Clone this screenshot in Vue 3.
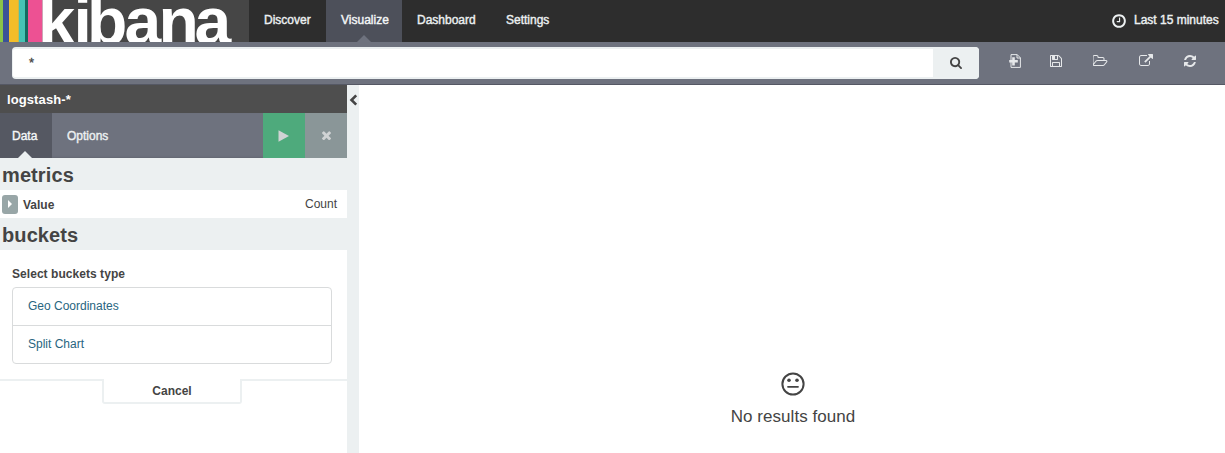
<script setup>
const nav = [
  { label: 'Discover', cls: 'discover' },
  { label: 'Visualize', cls: 'visualize active' },
  { label: 'Dashboard', cls: 'dashboard' },
  { label: 'Settings', cls: 'settings' }
]
const bucketTypes = ['Geo Coordinates', 'Split Chart']
</script>

<template>
  <div class="page">
    <header class="topbar">
      <svg class="logo" width="249" height="42" viewBox="0 0 249 42">
        <rect width="249" height="42" fill="#464646" />
        <rect width="3" height="42" fill="#8ac349" />
        <rect x="3" width="6" height="42" fill="#3b5297" />
        <rect x="9" width="9" height="42" fill="#f3bd29" />
        <rect x="18" width="1" height="42" fill="#c9b84e" />
        <rect x="19" width="6" height="42" fill="#45c3b5" />
        <rect x="25" width="3" height="42" fill="#136b60" />
        <rect x="28" width="14.5" height="42" fill="#ed5193" />
        <rect x="42.5" width="9.5" height="42" fill="#fff" />
        <text class="wordmark" x="38.600 73.600 87.100 124.500 158.600 194.500" y="44">kibana</text>
      </svg>
      <nav class="nav">
        <a v-for="n in nav" :key="n.label" class="nav-item" :class="n.cls">{{ n.label }}</a>
      </nav>
      <div class="time">
        <svg width="16" height="16" viewBox="0 0 1792 1792"><path d="M1024 544v448q0 14-9 23t-23 9h-320q-14 0-23-9t-9-23v-64q0-14 9-23t23-9h224v-352q0-14 9-23t23-9h64q14 0 23 9t9 23zm416 352q0-148-73-273t-198-198-273-73-273 73-198 198-73 273 73 273 198 198 273 73 273-73 198-198 73-273zm224 0q0 209-103 385.500t-279.500 279.500-385.500 103-385.500-103-279.500-279.500-103-385.500 103-385.500 279.500-279.500 385.500-103 385.500 103 279.500 279.500 103 385.500z" /></svg>
        <span>Last 15 minutes</span>
      </div>
    </header>

    <div class="querybar">
      <div class="search">
        <div class="query">*</div>
        <div class="go">
          <svg width="12" height="12" viewBox="64 128 1664 1664"><path d="M1216 832q0-185-131.500-316.500t-316.500-131.500-316.500 131.500-131.500 316.500 131.500 316.500 316.500 131.500 316.500-131.500 131.500-316.500zm512 832q0 52-38 90t-90 38q-54 0-90-38l-343-342q-179 124-399 124-143 0-273.500-55.500t-225-150-150-225-55.500-273.500 55.500-273.500 150-225 225-150 273.500-55.500 273.500 55.500 225 150 150 225 55.500 273.500q0 220-124 399l343 343q37 37 37 90z" /></svg>
        </div>
      </div>
      <div class="tools">
        <svg width="14" height="14" viewBox="0 0 14 14"><path d="M3 .6h6.200l3.200 3.200v9.600H3zM9 .6v3.400h3.400" fill="none" stroke="#e6e8ea" /><path d="M4.200 3.200h2.600v2.900h3v2.500h-3v2.900H4.200V8.600h-3V6.100h3z" /></svg>
        <svg width="14" height="14" viewBox="0 0 1792 1792"><path d="M512 1536h768v-384h-768v384zm896 0h128v-896q0-14-10-38.500t-20-34.500l-281-281q-10-10-34-20t-39-10v416q0 40-28 68t-68 28h-576q-40 0-68-28t-28-68v-416h-128v1280h128v-416q0-40 28-68t68-28h832q40 0 68 28t28 68v416zm-384-928v-320q0-13-9.500-22.500t-22.500-9.500h-192q-13 0-22.500 9.500t-9.500 22.500v320q0 13 9.500 22.500t22.500 9.500h192q13 0 22.500-9.500t9.500-22.500zm640 32v928q0 40-28 68t-68 28h-1344q-40 0-68-28t-28-68v-1344q0-40 28-68t68-28h928q40 0 88 20t76 48l280 280q28 28 48 76t20 88z" /></svg>
        <svg width="15" height="14" viewBox="0 0 1920 1792"><path d="M1717 931q0-35-53-35h-1088q-40 0-85.500 21.500t-71.500 52.500l-294 363q-18 24-18 40 0 35 53 35h1088q40 0 86-22t71-53l294-363q18-22 18-39zm-1141-163h768v-160q0-40-28-68t-68-28h-576q-40 0-68-28t-28-68v-64q0-40-28-68t-68-28h-320q-40 0-68 28t-28 68v853l256-315q44-53 116-87.500t140-34.500zm1269 163q0 62-46 120l-295 363q-43 53-116 87.500t-140 34.500h-1088q-92 0-158-66t-66-158v-960q0-92 66-158t158-66h320q92 0 158 66t66 158v32h544q92 0 158 66t66 158v160h192q54 0 99 24.500t67 70.500q15 32 15 68z" /></svg>
        <svg width="14" height="14" viewBox="0 0 1792 1792"><path d="M1408 928v320q0 119-84.500 203.500t-203.500 84.500h-832q-119 0-203.500-84.500t-84.500-203.500v-832q0-119 84.500-203.500t203.500-84.500h704q14 0 23 9t9 23v64q0 14-9 23t-23 9h-704q-66 0-113 47t-47 113v832q0 66 47 113t113 47h832q66 0 113-47t47-113v-320q0-14 9-23t23-9h64q14 0 23 9t9 23zm384-864v512q0 26-19 45t-45 19-45-19l-176-176-652 652q-10 10-23 10t-23-10l-114-114q-10-10-10-23t10-23l652-652-176-176q-19-19-19-45t19-45 45-19h512q26 0 45 19t19 45z" /></svg>
        <svg width="14" height="14" viewBox="0 0 1792 1792"><path d="M1639 1056q0 5-1 7-64 268-268 434.500t-478 166.500q-146 0-282.500-55t-243.500-157l-129 129q-19 19-45 19t-45-19-19-45v-448q0-26 19-45t45-19h448q26 0 45 19t19 45-19 45l-137 137q71 66 161 102t187 36q134 0 250-65t186-179q11-17 53-117 8-23 30-23h192q13 0 22.500 9.500t9.500 22.500zm25-800v448q0 26-19 45t-45 19h-448q-26 0-45-19t-19-45 19-45l138-138q-148-137-349-137-134 0-250 65t-186 179q-11 17-53 117-8 23-30 23h-199q-13 0-22.500-9.500t-9.500-22.500v-7q65-268 270-434.500t480-166.500q146 0 284 55.500t245 156.500l130-129q19-19 45-19t45 19 19 45z" /></svg>
      </div>
    </div>

    <main class="content">
      <aside class="sidebar">
        <div class="index"><span>logstash-*</span></div>
        <div class="tabs">
          <a class="tab active">Data</a>
          <a class="tab">Options</a>
          <div class="apply"><svg width="12" height="12" viewBox="0 0 12 12"><path d="M.5.3 11 6 .5 11.700z" /></svg></div>
          <div class="discard"><svg width="9" height="9" viewBox="302 340 1188 1188"><path d="M1490 1322q0 40-28 68l-136 136q-28 28-68 28t-68-28l-294-294-294 294q-28 28-68 28t-68-28l-136-136q-28-28-28-68t28-68l294-294-294-294q-28-28-28-68t28-68l136-136q28-28 68-28t68 28l294 294 294-294q28-28 68-28t68 28l136 136q28 28 28 68t-28 68l-294 294 294 294q28 28 28 68z" /></svg></div>
        </div>
        <h2 class="heading">metrics</h2>
        <div class="metric">
          <div class="toggle"><svg width="4" height="8" viewBox="0 0 4 8"><path d="M0 0l4 4-4 4z" /></svg></div>
          <b class="metric-name">Value</b>
          <span class="metric-type">Count</span>
        </div>
        <h2 class="heading">buckets</h2>
        <div class="picker">
          <b class="picker-title">Select buckets type</b>
          <div class="list">
            <a v-for="b in bucketTypes" :key="b" class="option">{{ b }}</a>
          </div>
        </div>
        <div class="foot">
          <i class="line left"></i>
          <div class="cancel">Cancel</div>
          <i class="line right"></i>
        </div>
      </aside>
      <div class="gutter">
        <svg width="9" height="12" viewBox="0 0 9 12"><path d="M7.200 1.300 2.500 6l4.700 4.700" fill="none" stroke="#444" stroke-width="2.600" /></svg>
      </div>
      <section class="vis">
        <svg width="24" height="24" viewBox="0 0 24 24"><circle cx="12" cy="12" r="10.600" fill="none" stroke="#444" stroke-width="2" /><circle cx="8" cy="8.200" r="1.800" /><circle cx="16" cy="8.200" r="1.800" /><path d="M7 14.800h10" stroke="#444" stroke-width="1.800" stroke-linecap="round" /></svg>
        <p>No results found</p>
      </section>
    </main>
  </div>
</template>

<style>
body { margin: 0; background: #fff; }
</style>

<style scoped>
* { box-sizing: border-box; }
.page { width: 1225px; height: 453px; overflow: hidden; font: 12px/18px "Liberation Sans", Arial, sans-serif; color: #444; background: #fff; }
svg { display: block; flex: none; }
span, b, a, p { white-space: nowrap; }
.topbar { height: 42px; background: #2d2d2d; display: flex; color: #ecf0f1; }
.logo { overflow: hidden; }
.wordmark { font: bold 66px "Liberation Sans", Arial, sans-serif; fill: #fff; }
.nav { display: flex; flex: 1; }
.nav-item { height: 42px; padding: 11px 0 0 15px; position: relative; -webkit-text-stroke: .4px #ecf0f1; }
.discover { width: 77px; }
.visualize { width: 76px; }
.dashboard { width: 89px; }
.nav-item.active { background: #4d505a; color: #fff; }
.nav-item.active::after { content: ""; position: absolute; left: 31px; bottom: 0; border: 7px solid transparent; border-top: 0; border-bottom-color: #6e727e; }
.time { display: flex; width: 114px; padding-top: 11px; -webkit-text-stroke: .4px #ecf0f1; }
.time svg { fill: #ecf0f1; margin: 2px 7px 0 0; }
.querybar { height: 43px; background: #6e727e; border-bottom: 1px solid #555864; display: flex; padding: 5px 0 0 12px; }
.search { width: 967px; height: 32px; display: flex; background: #fff; border: solid #ecf0f1; border-width: 2px 0 2px 1px; border-radius: 4px; }
.query { flex: 1; padding: 5px 0 0 16px; font-size: 13px; -webkit-text-stroke: .3px #444; }
.go { width: 46px; margin: -2px 0; background: #ecf0f1; border-radius: 0 4px 4px 0; padding: 10px 0 0 17px; fill: #444; }
.tools { display: flex; fill: #e6e8ea; padding: 7px 0 0 29px; gap: 27px; }
.tools svg:nth-child(3) { margin-left: 3px; }
.tools svg:nth-child(4) { margin-left: 4px; }
.tools svg:nth-child(5) { margin-left: 3px; }
.content { display: flex; height: 368px; }
.sidebar { width: 347px; }
.index { height: 28px; background: #4e4e4e; color: #fff; font-size: 13px; font-weight: bold; letter-spacing: .1px; padding: 6px 0 0 7px; }
.tabs { height: 45px; background: #6e727e; display: flex; color: #ecf0f1; box-shadow: inset 0 -1px 2px #00000018; }
.tab { padding: 14px 15px 0; -webkit-text-stroke: .4px #ecf0f1; flex: 1; }
.tab.active { flex: none; width: 52px; background: #555862; padding-left: 12px; position: relative; color: #fff; }
.tab.active::after { content: ""; position: absolute; left: 18px; bottom: 0; border: 7px solid transparent; border-top: 0; border-bottom-color: #ecf0f1; }
.apply, .discard { width: 42px; display: flex; align-items: center; justify-content: center; fill: #d0d3d4; }
.apply { background: #4eaa7c; }
.discard { background: #8a9698; }
.heading { margin: 0; height: 32px; background: #ecf0f1; font-size: 20px; line-height: 34px; letter-spacing: .1px; padding-left: 2px; }
.metric { height: 28px; display: flex; padding: 5px 10px 0 2px; }
.toggle { width: 16px; height: 19px; background: #98a6a7; border-radius: 3px; fill: #fff; padding: 5px 0 0 6px; margin-right: 5px; }
.metric-name { line-height: 20px; flex: 1; }
.metric-type { line-height: 18px; }
.picker { height: 129px; padding: 15px 15px 0 12px; }
.picker-title { display: block; letter-spacing: .05px; }
.list { margin-top: 4px; border: 1px solid #d9dbdc; border-radius: 4px; height: 77px; color: #286580; }
.option { display: block; height: 37px; padding: 9px 0 0 15px; }
.option + .option { border-top: 1px solid #d9dbdc; }
.foot { display: flex; }
.line { height: 2px; background: #ecf0f1; }
.line.left { width: 102px; }
.line.right { flex: 1; }
.cancel { width: 140px; height: 25px; border: 2px solid #ecf0f1; border-top: 0; border-radius: 0 0 3px 3px; text-align: center; font-weight: bold; padding-top: 3px; }
.gutter { width: 12px; background: #ecf0f1; padding: 9px 0 0 2px; }
.vis { flex: 1; display: flex; flex-direction: column; align-items: center; padding: 287px 0 0 2px; fill: #444; }
.vis p { margin: 8px 0 0; font-size: 17px; line-height: 26px; letter-spacing: .05px; }
</style>
